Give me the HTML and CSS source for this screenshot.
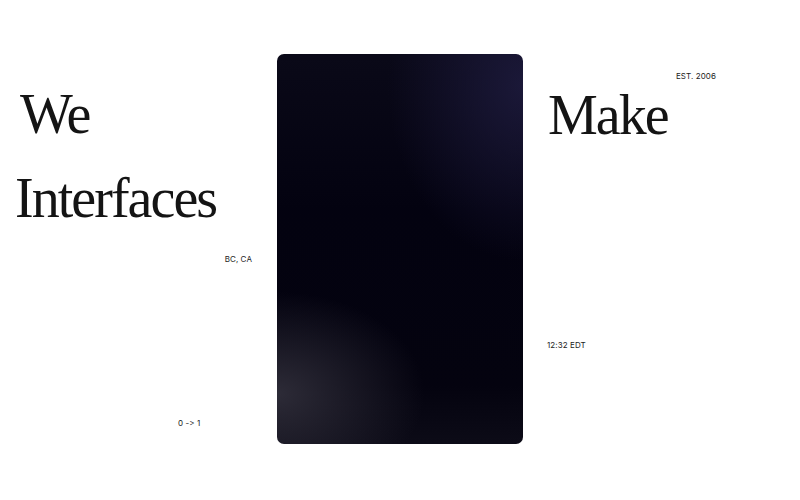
FILE: index.html
```html
<!DOCTYPE html>
<html lang="en">
<head>
<meta charset="utf-8">
<title>We Make Interfaces</title>
<link rel="stylesheet" href="styles.css">
</head>
<body>
<main class="stage">
  <section class="side side-left">
    <h1 class="word word-we">We</h1>
    <h1 class="word word-interfaces">Interfaces</h1>
    <p class="note note-place">BC, CA</p>
    <p class="note note-range">0 -&gt; 1</p>
  </section>
  <div class="card"></div>
  <section class="side side-right">
    <p class="note note-est">EST. 2006</p>
    <h1 class="word word-make">Make</h1>
    <p class="note note-time">12:32 EDT</p>
  </section>
</main>
</body>
</html>
```
FILE: styles.css
```css
html, body {
  margin: 0;
  padding: 0;
  background: #ffffff;
}

.stage {
  display: grid;
  grid-template-columns: 277px 246px 277px;
  align-items: start;
  width: 800px;
  height: 500px;
}

.side {
  display: flex;
  flex-direction: column;
  align-items: flex-start;
}

.word {
  margin: 0;
  font-family: "Liberation Serif", "Times New Roman", serif;
  font-weight: 400;
  font-size: 56px;
  line-height: 1;
  letter-spacing: -0.035em;
  color: #141414;
}

.note {
  margin: 0;
  font-family: Inter, "Liberation Sans", sans-serif;
  font-size: 8px;
  line-height: 10px;
  color: #1c1c1c;
  letter-spacing: 0.01em;
}

.word-we {
  margin-top: 86px;
  margin-left: 20px;
}

.word-interfaces {
  margin-top: 28px;
  margin-left: 15px;
}

.note-place {
  align-self: flex-end;
  margin-top: 28px;
  margin-right: 25px;
}

.note-range {
  margin-top: 154px;
  margin-left: 178px;
}

.card {
  margin-top: 54px;
  height: 390px;
  border-radius: 7px;
  background:
    radial-gradient(ellipse 60% 26% at 0% 87%, rgba(52, 50, 62, 0.85), rgba(52, 50, 62, 0) 100%),
    radial-gradient(ellipse 55% 45% at 100% 8%, rgba(30, 27, 62, 0.85), rgba(30, 27, 62, 0) 100%),
    linear-gradient(180deg, #0a0918 0%, #030210 40%, #04030f 85%, #0c0b17 100%);
}

.note-est {
  align-self: flex-end;
  margin-top: 71px;
  margin-right: 84px;
}

.word-make {
  margin-top: 6px;
  margin-left: 25px;
}

.note-time {
  margin-top: 197px;
  margin-left: 24px;
}
```
